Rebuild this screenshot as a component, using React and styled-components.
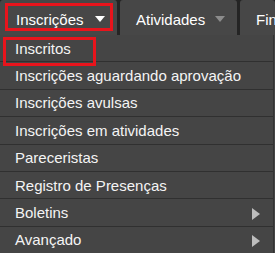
import React from "react";
import styled, { createGlobalStyle } from "styled-components";

const GlobalStyle = createGlobalStyle`
  html, body { margin: 0; padding: 0; background: #454545; }
  body { font-family: "Liberation Sans", Arial, sans-serif; }
`;

const Page = styled.div`
  width: 275px;
  height: 253px;
  overflow: hidden;
  background: #454545;
`;

const TabBar = styled.div`
  display: flex;
  gap: 3px;
  height: 35px;
  background: #242424;
`;

const Tab = styled.div`
  position: relative;
  flex: ${(p) => (p.$grow ? "1 1 auto" : "0 0 117px")};
  box-sizing: border-box;
  display: flex;
  align-items: center;
  justify-content: space-between;
  padding: 3px 12px 0 16px;
  background: #474747;
  color: #ffffff;
  font-size: 15px;
  border-radius: 3px 3px 0 0;
  white-space: nowrap;
  overflow: hidden;
`;

const Caret = styled.span`
  width: 0;
  height: 0;
  border-left: 5.5px solid transparent;
  border-right: 5.5px solid transparent;
  border-top: 6px solid ${(p) => p.$color};
  margin-top: -1px;
`;

const Highlight = styled.div`
  position: absolute;
  left: ${(p) => p.$left}px;
  top: ${(p) => p.$top}px;
  width: ${(p) => p.$w}px;
  height: ${(p) => p.$h}px;
  box-sizing: border-box;
  border: 3px solid #e8141c;
  pointer-events: none;
`;

const Menu = styled.ul`
  list-style: none;
  margin: 0;
  padding: 0;
  width: 274px;
  border-right: 1px solid #333;
  box-sizing: border-box;
  background: #454545;
`;

const Item = styled.li`
  position: relative;
  box-sizing: border-box;
  height: 27.4px;
  display: flex;
  align-items: center;
  justify-content: space-between;
  padding: 0 13px 0 15px;
  border-bottom: 1px solid #303030;
  color: #f4f4f4;
  font-size: 15px;
  white-space: nowrap;
`;

const Arrow = styled.span`
  width: 0;
  height: 0;
  border-top: 6px solid transparent;
  border-bottom: 6px solid transparent;
  border-left: 8px solid #bdbdbd;
  margin-top: 2px;
`;

const items = [
  { label: "Inscritos", highlight: true },
  { label: "Inscrições aguardando aprovação" },
  { label: "Inscrições avulsas" },
  { label: "Inscrições em atividades" },
  { label: "Pareceristas" },
  { label: "Registro de Presenças" },
  { label: "Boletins", sub: true },
  { label: "Avançado", sub: true },
];

export default function App() {
  return (
    <Page>
      <GlobalStyle />
      <TabBar>
        <Tab>
          Inscrições
          <Caret $color="#ffffff" />
          <Highlight $left={5} $top={3} $w={108} $h={28} />
        </Tab>
        <Tab>
          Atividades
          <Caret $color="#8c8c8c" />
        </Tab>
        <Tab $grow>Financeiro</Tab>
      </TabBar>
      <Menu>
        {items.map((it) => (
          <Item key={it.label}>
            <span>{it.label}</span>
            {it.sub && <Arrow />}
            {it.highlight && <Highlight $left={3} $top={2} $w={93} $h={29} />}
          </Item>
        ))}
      </Menu>
    </Page>
  );
}
